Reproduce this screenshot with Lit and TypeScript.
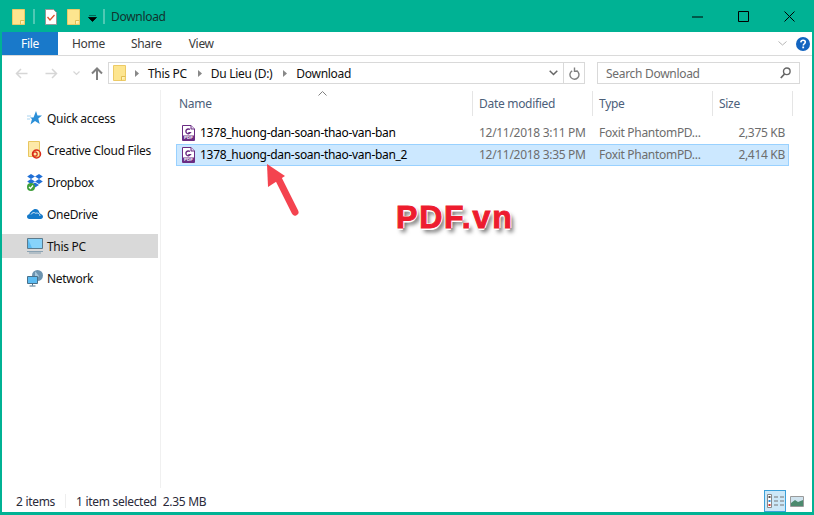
import { LitElement, html, css, svg } from "lit";
import { customElement } from "lit/decorators.js";

const folder = svg`<svg width="13" height="16" viewBox="0 0 13 16"><path d="M.5.500h12v15H.5z" fill="#fde58f" stroke="#ecca66"/><path d="M8.500 15.500v-4h4" fill="#fff2b8" stroke="#e0bd55"/></svg>`;
const pdfIcon = svg`<svg width="13" height="16" viewBox="0 0 13 16"><path d="M.5.500h8.500l3.500 3.500v11.500H.5z" fill="#fff" stroke="#6a2c83"/><path d="M9 .5V4h3.500" fill="#e9dff0" stroke="#6a2c83"/><path d="M8 4.600a2.400 2.400 0 1 0 .3 3.100H6.300" fill="none" stroke="#6a2c83" stroke-width="1.400"/><rect x="1" y="10.500" width="11" height="4.500" fill="#6a2c83"/><text x="6.500" y="14.400" text-anchor="middle" font-family="Liberation Sans" font-weight="700" font-size="4.400" letter-spacing="0" fill="#fff">PDF</text></svg>`;
const sep = svg`<svg width="4" height="7"><path d="M0 0l4 3.500L0 7z" fill="#888"/></svg>`;

@customElement("app-root")
export class AppRoot extends LitElement {
  static styles = css`
    :host {
      display: flex; flex-direction: column; position: relative;
      width: 814px; height: 515px; box-sizing: border-box; overflow: hidden;
      border: 2px solid #00b294; border-top-width: 1px; border-bottom-width: 3px; background: #fff;
      font-family: "Noto Sans", "Open Sans", sans-serif; font-size: 12px; color: #000;
      letter-spacing: -0.3px;
    }
    svg { display: block; flex: none; }
    .title { height: 31px; background: #00b294; display: flex; align-items: center; padding-left: 10px; flex: none; }
    .qsep { height: 13px; width: 0; border: 1px solid #4fc9b4; margin: 0 10px 0 8px; }
    .qsep.last { margin: 0 0 0 6px; }
    .gap { width: 10px; flex: none; }
    .qdrop { margin-left: 8px; margin-top: 4px; }
    .caption { margin-left: 6px; color: #12332e; font-size: 12px; }
    .spacer { flex: 1; }
    .wc { width: 46px; display: flex; justify-content: center; }
    .tabs { height: 23px; display: flex; align-items: stretch; flex: none; border-bottom: 1px solid #dadada; }
    .file { width: 56px; background: #1979ca; color: #fff; display: flex; align-items: center; justify-content: center; }
    .tab { color: #3b3b3b; display: flex; align-items: center; }
    .tab.h { margin-left: 14px; } .tab.s { margin-left: 26px; } .tab.v { margin-left: 27px; }
    .ribbon-right { margin-left: auto; display: flex; align-items: center; gap: 9px; padding-right: 2px; }
    .nav { height: 34px; flex: none; display: flex; align-items: center; padding-left: 13px; }
    .navicons { display: flex; align-items: center; width: 93px; }
    .fwd { margin-left: 17px; } .dn { margin-left: 15px; } .up { margin-left: 11px; }
    .addr { width: 477px; height: 22px; box-sizing: border-box; border: 1px solid #d9d9d9; display: flex; align-items: center; padding-left: 4px; }
    .addr-first { margin-left: 9px; }
    .crumb { margin: 0 11px 0 9px; color: #111; }
    .drop { margin-left: auto; width: 20px; display: flex; justify-content: center; }
    .refresh { width: 20px; height: 100%; border-left: 1px solid #d9d9d9; display: flex; align-items: center; justify-content: center; }
    .search { margin-left: 12px; width: 203px; height: 22px; box-sizing: border-box; border: 1px solid #d9d9d9; display: flex; align-items: center; justify-content: space-between; padding: 0 8px; color: #6d6d6d; }
    .main { flex: 1; display: flex; min-height: 0; }
    .side { width: 156px; flex: none; padding-top: 16px; display: flex; flex-direction: column; gap: 8px; }
    .item { height: 24px; display: flex; align-items: center; color: #111; }
    .item.on { background: #d9d9d9; }
    .ic { width: 45px; display: flex; justify-content: flex-end; padding-right: 4px; box-sizing: border-box; }
    .ic.n { padding-right: 5px; }
    .rule { width: 1px; background: #f0f0f0; margin-left: 2px; margin-right: 15px; flex: none; }
    .list { flex: 1; display: flex; flex-direction: column; min-width: 0; }
    .head { height: 25px; margin-top: 1px; display: flex; color: #4c607a; position: relative; flex: none; margin-bottom: 6px; }
    .h1, .h2, .h3, .h4 { box-sizing: border-box; display: flex; align-items: center; border-right: 1px solid #e5e5e5; }
    .h1 { width: 297px; padding-left: 3px; }
    .h2, .h3 { width: 120px; padding-left: 6px; }
    .h4 { width: 80px; padding-left: 6px; }
    .caret { position: absolute; left: 142px; top: 0; }
    .row { width: 613px; height: 22px; box-sizing: border-box; border: 1px solid transparent; padding-bottom: 1px; display: flex; align-items: center; color: #6d6d6d; }
    .row.sel { background: #cce8ff; border-color: #99d1ff; }
    .c1 { width: 296px; display: flex; align-items: center; color: #000; padding-left: 5px; box-sizing: border-box; gap: 5px; }
    .c2, .c3 { width: 120px; padding-left: 6px; box-sizing: border-box; }
    .c4 { width: 72px; text-align: right; }
    .status { height: 24px; box-sizing: border-box; padding-top: 2px; flex: none; display: flex; align-items: center; padding-left: 14px; color: #2a2a3a; }
    .ssep { width: 1px; height: 14px; background: #eee; margin: 0 10px; }
    .size { margin-left: 6px; }
    .views { margin-left: auto; display: flex; align-items: center; padding-right: 8px; gap: 4px; }
    .vb { width: 22px; height: 22px; box-sizing: border-box; border: 1px solid #3ca0d8; background: #cce8f8; display: flex; align-items: center; justify-content: center; }
    .arrow { position: absolute; left: 262px; top: 158px; }
    .brand { position: absolute; left: 394px; top: 196px; font: bold 32px/40px "Liberation Sans", Arial, sans-serif; letter-spacing: 1.8px; color: #ed1c2e; -webkit-text-stroke: 1px #ed1c2e;
      text-shadow: 1.500px 0 0 #fff, -1.500px 0 0 #fff, 0 1.500px 0 #fff, 0 -1.500px 0 #fff, 3px 4px 4px rgba(0,0,0,.6); }
  `;

  render() {
    return html`
      <div class="title">
        ${folder}<span class="qsep"></span>
        <svg width="12" height="16" viewBox="0 0 12 16"><path d="M.5.500h8l3 3v12H.5z" fill="#fff" stroke="#999"/><path d="M2.500 8l2.500 3 4.500-5" fill="none" stroke="#e0512a" stroke-width="1.300"/></svg>
        <span class="gap"></span>${folder}
        <svg class="qdrop" width="9" height="7" viewBox="0 0 9 7"><path d="M1 0h7M.5 2.500h8L4.500 6.500z" stroke="#000" fill="#000" stroke-width=".8"/></svg>
        <span class="qsep last"></span>
        <span class="caption">Download</span>
        <span class="spacer"></span>
        <span class="wc"><svg width="11" height="2"><path d="M0 1h11" stroke="#000"/></svg></span>
        <span class="wc"><svg width="11" height="11"><path d="M.5.500h10v10H.5z" fill="none" stroke="#000"/></svg></span>
        <span class="wc"><svg width="11" height="11"><path d="M.5.500l10 10M10.500.500l-10 10" stroke="#000"/></svg></span>
      </div>
      <div class="tabs">
        <div class="file">File</div>
        <div class="tab h">Home</div><div class="tab s">Share</div><div class="tab v">View</div>
        <div class="ribbon-right">
          <svg width="9" height="5" viewBox="0 0 9 5"><path d="M.5.500l4 3.500 4-3.500" fill="none" stroke="#b5b5b5"/></svg>
          <svg width="14" height="14" viewBox="0 0 14 14"><circle cx="7" cy="7" r="7" fill="#1264c0"/><path d="M4.800 5.300C5 3.800 6 3.200 7.100 3.200c1.400 0 2.200.8 2.200 1.900 0 1.600-2 1.700-2 3.300" fill="none" stroke="#fff" stroke-width="1.600"/><rect x="6.300" y="9.500" width="1.800" height="1.800" fill="#fff"/></svg>
        </div>
      </div>
      <div class="nav">
        <div class="navicons">
          <svg width="13" height="11" viewBox="0 0 13 11"><path d="M12.500 5.500H1.500M6 1L1.500 5.500 6 10" fill="none" stroke="#d6d6d6" stroke-width="1.500"/></svg>
          <svg class="fwd" width="13" height="11" viewBox="0 0 13 11"><path d="M.5 5.500h11M7 1l4.500 4.500L7 10" fill="none" stroke="#d6d6d6" stroke-width="1.500"/></svg>
          <svg class="dn" width="7" height="5" viewBox="0 0 7 5"><path d="M.5.500l3 3 3-3" fill="none" stroke="#d6d6d6" stroke-width="1.200"/></svg>
          <svg class="up" width="12" height="13" viewBox="0 0 12 13"><path d="M6 13V1.500M1 6.500l5-5 5 5" fill="none" stroke="#808080" stroke-width="2"/></svg>
        </div>
        <div class="addr">
          ${folder}
          <span class="addr-first">${sep}</span>
          <span class="crumb">This PC</span>${sep}
          <span class="crumb">Du Lieu (D:)</span>${sep}
          <span class="crumb">Download</span>
          <span class="drop"><svg width="9" height="6" viewBox="0 0 9 6"><path d="M.7.700l3.800 3.800L8.300.700" fill="none" stroke="#666" stroke-width="1.500"/></svg></span>
          <span class="refresh"><svg width="11" height="13" viewBox="0 0 11 13"><path d="M3.200 3.800A4.500 4.500 0 1 0 7.500 3.700M5.500 .5v3.800H9" fill="none" stroke="#808080" stroke-width="1.400"/></svg></span>
        </div>
        <div class="search">
          <span>Search Download</span>
          <svg width="11" height="12" viewBox="0 0 11 12"><circle cx="6.800" cy="4.300" r="3.300" fill="none" stroke="#666" stroke-width="1.400"/><path d="M4.500 7L.8 11" stroke="#666" stroke-width="1.800"/></svg>
        </div>
      </div>
      <div class="main">
        <div class="side">
          <div class="item"><span class="ic n"><svg width="15" height="14" viewBox="0 0 15 14"><path d="M9 0l1.500 4.500H15l-3.700 3 1.400 5.500L8 10l-4.500 3.500L5 8 3 6.500h3.500z" fill="#2b8fd8"/><path d="M0 5h4M0 8h3" stroke="#a8d3ef"/></svg></span>Quick access</div>
          <div class="item"><span class="ic n"><svg width="14" height="18" viewBox="0 0 14 18"><path d="M.5.500h11v15H.5z" fill="#fde9a8" stroke="#e8c65f"/><circle cx="8.500" cy="13" r="4" fill="none" stroke="#d92b1a" stroke-width="1.500"/><circle cx="7" cy="13" r="2.200" fill="none" stroke="#d92b1a" stroke-width="1.200"/></svg></span>Creative Cloud Files</div>
          <div class="item"><span class="ic"><svg width="16" height="17" viewBox="0 0 16 17"><path d="M4 0L.2 2.500 4 5l4-2.500zM12 0L8 2.500 12 5l3.800-2.500zM4 5L.2 7.500 4 10l4-2.500zM12 5L8 7.500l4 2.500 3.800-2.500zM4 11l4-2.500 4 2.500-4 2.500z" fill="#1f6fd6"/><circle cx="4" cy="13" r="4" fill="#3f9e3a"/><path d="M2 13l1.500 1.500L6 11.500" stroke="#fff" stroke-width="1.200" fill="none"/></svg></span>Dropbox</div>
          <div class="item"><span class="ic"><svg width="16" height="10" viewBox="0 0 16 10"><path d="M2.500 10C.8 10 0 8.800 0 7.600 0 6.300 1 5.300 2.300 5.300 2.800 3 4.200 2.500 5 1.800 6 .5 7.300 0 8.500 0c1.800 0 3.200 1.300 3.700 3 .2 1 .8 1.500 1.600 2C15 5.300 16 6.500 16 7.800 16 9 15 10 13.800 10z" fill="#1479c9"/><path d="M4 5.500C5 3.500 7 3 8.500 4.200 11 3.300 13 5 13 7" fill="none" stroke="#fff" stroke-width=".8"/></svg></span>OneDrive</div>
          <div class="item on"><span class="ic"><svg width="16" height="16" viewBox="0 0 16 16"><path d="M.5.500h15v10H.5z" fill="#5cbcf2" stroke="#5b7a8c"/><path d="M1 1h14v9L5 10z" fill="#87d3fa"/><path d="M0 13.500h16M2 15h12" stroke="#8aa2b2"/></svg></span>This PC</div>
          <div class="item"><span class="ic"><svg width="16" height="17" viewBox="0 0 16 17"><circle cx="10.500" cy="5.500" r="5.500" fill="#6d94b0"/><path d="M8 1.500c2 1 2 3 4 4.500-1 2-3 2-4 1" fill="#a8c8dc"/><path d="M.5 6.500h10v7H.5z" fill="#5cbcf2" stroke="#49708a"/><path d="M5.500 13.500v2M2.500 16h6" stroke="#49708a"/></svg></span>Network</div>
        </div>
        <div class="rule"></div>
        <div class="list">
          <div class="head">
            <svg class="caret" width="9" height="5" viewBox="0 0 9 5"><path d="M.5 4.500l4-4 4 4" fill="none" stroke="#808080"/></svg>
            <div class="h1">Name</div><div class="h2">Date modified</div><div class="h3">Type</div><div class="h4">Size</div>
          </div>
          <div class="row"><div class="c1">${pdfIcon}<span>1378_huong-dan-soan-thao-van-ban</span></div><div class="c2">12/11/2018 3:11 PM</div><div class="c3">Foxit PhantomPD...</div><div class="c4">2,375 KB</div></div>
          <div class="row sel"><div class="c1">${pdfIcon}<span>1378_huong-dan-soan-thao-van-ban_2</span></div><div class="c2">12/11/2018 3:35 PM</div><div class="c3">Foxit PhantomPD...</div><div class="c4">2,414 KB</div></div>
        </div>
      </div>
      <div class="status">
        <span>2 items</span><span class="ssep"></span><span>1 item selected</span><span class="size">2.35 MB</span>
        <div class="views">
          <div class="vb"><svg width="17" height="14" viewBox="0 0 17 14"><path d="M.5.500h4v13h-4z" fill="#fff" stroke="#888"/><path d="M1.500 2h2v2h-2z" fill="#555"/><path d="M1.500 6h2v2h-2z" fill="#2a8fe0"/><path d="M1.500 10h2v2h-2z" fill="#d0342c"/><path d="M7 3h4M13 3h4M7 7h4M13 7h4M7 11h4M13 11h4" stroke="#777" stroke-width="1.200"/></svg></div>
          <svg width="14" height="11" viewBox="0 0 14 11"><path d="M.5.500h13v10H.5z" fill="#cfe3ee" stroke="#9a9a9a"/><path d="M1 7l4-3 3 2 5-2v6H1z" fill="#4d8a6e"/></svg>
        </div>
      </div>
      <svg class="arrow" width="38" height="60" viewBox="0 0 38 60"><path d="M31 53L14 19" stroke="#f4434f" stroke-width="7" stroke-linecap="round"/><path d="M3 5l1 23 17-11z" fill="#f4434f"/></svg>
      <div class="brand">PDF.vn</div>
    `;
  }
}
